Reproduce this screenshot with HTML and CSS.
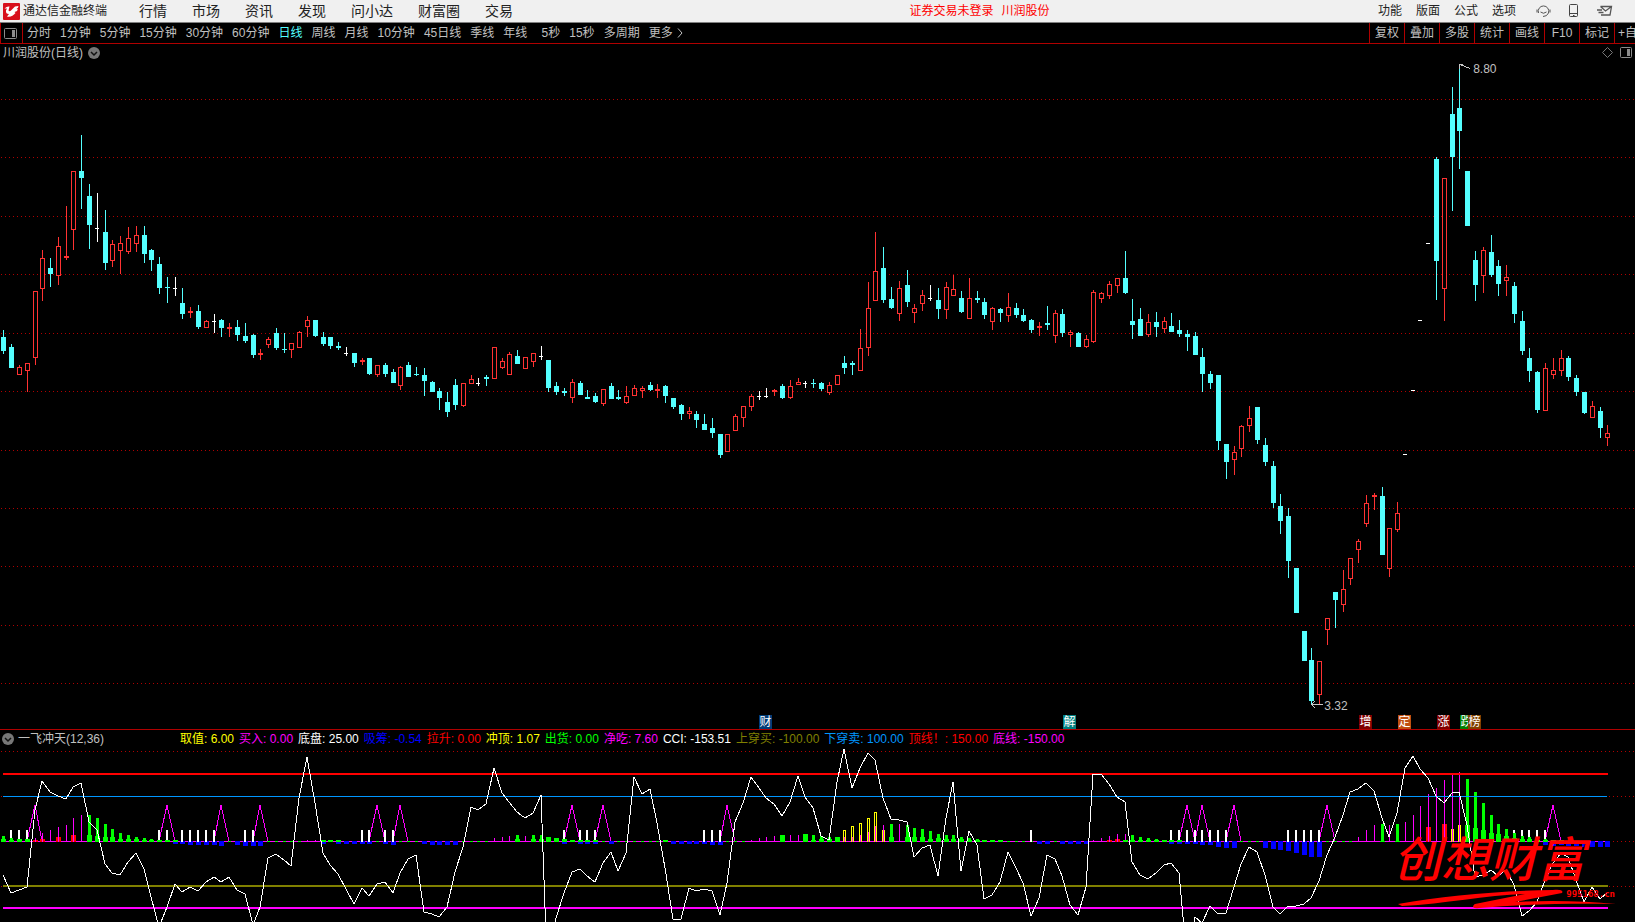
FILE: index.html
```html
<!DOCTYPE html>
<html lang="zh-CN">
<head>
    <meta charset="UTF-8">
    <meta name="viewport" content="width=device-width, initial-scale=1.0">
    <title>通达信金融终端</title>
    <link rel="stylesheet" href="styles.css">
</head>
<body>
    <header class="titlebar">
        <svg class="logo" viewBox="0 0 17 17" aria-hidden="true">
            <rect width="17" height="17" rx="1" fill="#d8101c"/>
            <path d="M1.500 5.500Q4 3 6.500 3.500L5.500 7.500Q6.500 9 8 7.500L12 3.500 15.500 3Q15.500 5 13.500 6L15 6.500Q14 8.500 11.500 9L12.500 10Q9 14.500 4 13.500L6 11Q2.500 11 3 7.500L4 5.500Z" fill="#fff"/>
        </svg>
        <span class="app-name">通达信金融终端</span>
        <nav class="main-menu">
            <a href="#">行情</a>
            <a href="#">市场</a>
            <a href="#">资讯</a>
            <a href="#">发现</a>
            <a href="#">问小达</a>
            <a href="#">财富圈</a>
            <a href="#">交易</a>
        </nav>
        <div class="login-state">
            <span>证券交易未登录</span>
            <span>川润股份</span>
        </div>
        <nav class="tool-menu">
            <a href="#">功能</a>
            <a href="#">版面</a>
            <a href="#">公式</a>
            <a href="#">选项</a>
        </nav>
        <div class="title-icons">
            <button type="button" aria-label="客服">
                <svg width="15" height="14" viewBox="0 0 15 14" fill="none" stroke="#555">
                    <path d="M2.500 9A5.300 5.300 0 1 1 12.500 9Q11 12.500 7 12.500M4.500 8Q7.500 10.500 10.500 8M1 5.500v3M14 5.500v3"/>
                </svg>
            </button>
            <button type="button" aria-label="手机">
                <svg width="10" height="14" viewBox="0 0 10 14" fill="none" stroke="#444">
                    <rect x=".5" y=".5" width="8" height="12" rx="1"/>
                    <path d="M.5 9.500h8M4 11.500h1.500"/>
                </svg>
            </button>
            <button type="button" aria-label="消息">
                <svg width="16" height="12" viewBox="0 0 16 12" fill="none" stroke="#555" stroke-width="1.300">
                    <path d="M3.500 1.500h11l-1.500 8.500h-9M3.500 1.500l5 4.500 6-4.500M0 5h5M1.500 7.500h5"/>
                </svg>
            </button>
        </div>
    </header>

    <div class="toolbar">
        <button type="button" class="side-toggle" aria-label="侧栏">
            <svg width="13" height="11" viewBox="0 0 13 11">
                <rect x=".5" y=".5" width="12" height="10" rx="1" fill="none" stroke="#8c8c8c"/>
                <rect x="8" y="2" width="3" height="7" fill="#8c8c8c"/>
            </svg>
        </button>
        <div class="periods">
            <button type="button">分时</button>
            <button type="button">1分钟</button>
            <button type="button">5分钟</button>
            <button type="button">15分钟</button>
            <button type="button">30分钟</button>
            <button type="button">60分钟</button>
            <button type="button" class="active">日线</button>
            <button type="button">周线</button>
            <button type="button">月线</button>
            <button type="button">10分钟</button>
            <button type="button">45日线</button>
            <button type="button">季线</button>
            <button type="button">年线</button>
            <button type="button">5秒</button>
            <button type="button">15秒</button>
            <button type="button">多周期</button>
            <button type="button" class="more">更多
                <svg width="6" height="10" viewBox="0 0 6 10" fill="none" stroke="#c0c0c0"><path d="M1 .5 5 5 1 9.500"/></svg>
            </button>
        </div>
        <div class="actions">
            <button type="button">复权</button>
            <button type="button">叠加</button>
            <button type="button">多股</button>
            <button type="button">统计</button>
            <button type="button">画线</button>
            <button type="button">F10</button>
            <button type="button">标记</button>
            <button type="button" class="clipped">+自</button>
        </div>
    </div>

    <section class="panel price-panel">
        <svg id="price" class="plot" viewBox="0 44 1635 685" preserveAspectRatio="none"></svg>
        <div class="panel-head">
            <h1>川润股份(日线)</h1>
            <button type="button" class="round" aria-label="展开">
                <svg width="12" height="12" viewBox="0 0 12 12"><circle cx="6" cy="6" r="6" fill="#777"/><path d="M3 5 6 8 9 5" fill="none" stroke="#111" stroke-width="1.500"/></svg>
            </button>
            <div class="corner">
                <svg width="11" height="11" viewBox="0 0 11 11"><path d="M5.500.5 10.500 5.500 5.500 10.500.5 5.500Z" fill="none" stroke="#777"/></svg>
                <svg width="12" height="11" viewBox="0 0 12 11"><rect x=".5" y=".5" width="11" height="10" rx="1" fill="none" stroke="#8c8c8c"/><rect x="7" y="2" width="3" height="7" fill="#8c8c8c"/></svg>
            </div>
        </div>
        <span class="mark high">8.80</span>
        <span class="mark low">3.32</span>
        <div id="events"></div>
    </section>

    <section class="panel indicator-panel">
        <svg id="indicator" class="plot" viewBox="0 730 1635 192" preserveAspectRatio="none"></svg>
        <div class="panel-head">
            <button type="button" class="round" aria-label="展开">
                <svg width="12" height="12" viewBox="0 0 12 12"><circle cx="6" cy="6" r="6" fill="#777"/><path d="M3 5 6 8 9 5" fill="none" stroke="#111" stroke-width="1.500"/></svg>
            </button>
            <h2>一飞冲天(12,36)</h2>
            <div class="values">
                <span class="yellow">取值: 6.00</span>
                <span class="magenta">买入: 0.00</span>
                <span class="white">底盘: 25.00</span>
                <span class="blue">吸筹: -0.54</span>
                <span class="red">拉升: 0.00</span>
                <span class="yellow">冲顶: 1.07</span>
                <span class="green">出货: 0.00</span>
                <span class="magenta">净吃: 7.60</span>
                <span class="white">CCI: -153.51</span>
                <span class="olive">上穿买: -100.00</span>
                <span class="sky">下穿卖: 100.00</span>
                <span class="red">顶线！: 150.00</span>
                <span class="magenta">底线: -150.00</span>
            </div>
        </div>
        <div class="watermark">
            <svg viewBox="0 0 250 102" aria-hidden="true">
                <path d="M13 84C60 76 110 71 168 70 174 69 179 70 177 73L130 82C165 80 200 81 231 84 190 83 140 84 94 88 87 89 87 86 90 84L140 74C100 75 60 84 17 86Z" fill="#f00"/>
            </svg>
            <strong>创想财富</strong>
            <em>995168.cn</em>
        </div>
    </section>

    <script src="chart.js"></script>
</body>
</html>
```
FILE: styles.css
```css
* {
    box-sizing: border-box;
}
body {
    margin: 0;
    min-height: 100vh;
    display: grid;
    grid-template-rows: 23px 21px 1fr 192px;
    background-color: #000;
    color: #c0c0c0;
    font-family: "Liberation Sans", "Noto Sans CJK SC", sans-serif;
    font-size: 12px;
    overflow: hidden;
}
button {
    background: none;
    border: none;
    padding: 0;
    color: inherit;
    font: inherit;
    cursor: pointer;
    white-space: nowrap;
}
button svg {
    display: block;
}
a {
    color: inherit;
    text-decoration: none;
}

/* title bar */
.titlebar {
    display: flex;
    align-items: center;
    background-color: #f0f0f0;
    border-bottom: 1px solid #808080;
    color: #222;
    padding: 0 22px 0 3px;
    white-space: nowrap;
    line-height: 20px;
}
.logo {
    width: 17px;
    height: 17px;
    margin-right: 3px;
}
.main-menu {
    display: flex;
    gap: 25px;
    margin-left: 32px;
    font-size: 14px;
}
.login-state {
    flex: 1;
    display: flex;
    justify-content: center;
    gap: 8px;
    padding-left: 68px;
    color: #f00;
}
.tool-menu {
    display: flex;
    gap: 14px;
}
.title-icons {
    display: flex;
    align-items: center;
    gap: 18px;
    margin-left: 20px;
}

/* period toolbar */
.toolbar {
    display: flex;
    border-bottom: 1px solid #b00000;
    border-left: 1px solid #b00000;
    overflow: hidden;
    line-height: 20px;
}
.side-toggle {
    width: 22px;
    padding-left: 3px;
    border-right: 1px solid #b00000;
}
.periods {
    display: flex;
    gap: 9px;
    padding-left: 4px;
}
.periods button {
    min-width: 24px;
    text-align: right;
}
.periods .active {
    color: #54ffff;
}
.periods .more {
    display: flex;
    align-items: center;
    gap: 4px;
}
.actions {
    display: flex;
    margin-left: auto;
}
.actions button {
    width: 35px;
    border-left: 1px solid #b00000;
}
.actions .clipped {
    width: 21px;
    padding-left: 3px;
    text-align: left;
    overflow: hidden;
}

/* charts */
.panel {
    position: relative;
    overflow: hidden;
}
.price-panel {
    border-bottom: 1px solid #b00000;
}
.plot {
    position: absolute;
    width: 100%;
    height: 100%;
    shape-rendering: crispEdges;
}
.panel-head {
    position: relative;
    display: flex;
    align-items: center;
    height: 17px;
    padding: 0 3px 0 2px;
    line-height: 16px;
    white-space: nowrap;
}
.panel-head h1,
.panel-head h2 {
    margin: 0;
    font-size: 12px;
    font-weight: normal;
}
.panel-head h1 {
    padding: 0 5px 0 1px;
}
.panel-head h2 {
    width: 166px;
    padding-left: 4px;
}
.corner {
    display: flex;
    gap: 7px;
    margin-left: auto;
}
.values {
    display: flex;
    align-items: baseline;
    gap: 5px;
}
.yellow { color: #ff0; }
.magenta { color: #f0f; }
.white { color: #fff; }
.blue { color: #00f; }
.red { color: #f00; }
.green { color: #0f0; }
.olive { color: #808000; }
.sky { color: #0096ff; }

.mark {
    position: absolute;
    line-height: 14px;
}
.high {
    left: 90.100%;
    top: 2.700%;
}
.low {
    left: 81%;
    top: 95.600%;
}
.event {
    position: absolute;
    bottom: 0;
    width: 13px;
    height: 14px;
    margin-left: -7px;
    color: #fff;
    line-height: 14px;
    text-align: center;
}
.event.navy { background-color: #003c78; }
.event.teal { background-color: #008080; }
.event.maroon { background-color: #800000; }
.event.orange { background-color: #c05010; }
.event.forest { background-color: #008000; }
.event.brown { background-color: #804000; }

.watermark {
    position: absolute;
    right: 0;
    bottom: 0;
    width: 250px;
    height: 102px;
    padding: 8px 20px 0 8px;
    color: #f00;
}
.watermark svg {
    position: absolute;
    inset: 0;
}
.watermark strong {
    display: block;
    font-family: "Noto Sans CJK SC", sans-serif;
    font-size: 48px;
    font-style: italic;
    font-weight: 500;
    line-height: 56px;
}
.watermark em {
    position: relative;
    display: block;
    font: bold 9px "DejaVu Sans Mono", monospace;
    line-height: 20px;
    text-align: right;
}
```
FILE: chart.js
```js
const FIRST = 3.9;
const STEP = 7.786;
const xAt = i => Math.floor(FIRST + i * STEP);

// type (r = up, c = down, w = flat), high, body top, body bottom, low
const candles = `
c 330 337 351 354|c 344 347 368 368|r 365 367 375 375|r 363 363 371 392|r 291 291 358 365|r 250 258 289 301
c 258 268 274 287|r 237 246 276 285|r 206 256 258 260|r 171 171 230 250|c 135 171 178 209|c 184 196 225 249
w 193 228 229 242|c 210 232 263 270|r 240 244 261 267|r 236 243 251 274|r 227 238 252 254|r 226 235 244 252
c 226 235 254 263|c 249 250 260 271|c 257 264 288 294|c 277 287 288 303|w 277 288 289 296|c 288 303 314 319
r 307 311 313 318|c 305 311 327 329|r 320 321 328 328|w 314 321 322 333|c 319 320 328 337|r 323 327 329 337
c 320 327 335 341|c 323 336 341 343|c 334 335 355 358|r 349 353 355 360|r 337 339 345 348|c 328 333 348 350
c 333 349 350 353|r 343 343 350 358|r 331 332 348 348|r 316 320 327 337|c 320 320 336 337|c 332 337 344 346
c 337 337 346 349|c 342 346 348 350|w 347 353 354 356|c 353 353 363 367|r 358 360 362 365|c 358 358 374 375
r 365 365 375 377|c 363 365 374 377|c 369 372 383 383|r 366 367 386 390|c 362 365 377 377|c 367 374 375 376
c 368 375 381 396|c 381 382 392 392|c 388 391 398 410|c 392 402 412 417|c 379 385 405 410|r 383 383 406 407
r 375 379 384 384|w 378 383 384 386|c 375 377 379 386|r 347 347 379 379|r 358 361 368 369|r 352 354 375 375
c 350 356 364 364|r 357 357 369 369|r 353 353 362 367|w 346 356 357 360|c 360 360 388 392|c 382 386 392 395
c 388 391 393 396|r 379 382 398 403|c 381 383 395 395|c 390 397 399 399|c 393 396 402 403|r 389 389 404 406
c 383 386 399 399|c 390 397 399 400|r 386 396 403 404|r 385 388 396 396|r 386 388 391 398|c 382 385 390 391
r 384 389 391 398|c 385 386 396 403|c 398 398 407 409|c 404 405 414 420|r 407 411 414 419|c 411 414 420 428
c 414 424 430 430|c 418 428 433 438|c 434 434 455 458|r 434 434 452 452|r 414 416 431 431|r 406 406 418 427
r 394 396 407 411|w 391 396 397 400|w 388 396 397 398|r 389 390 392 396|c 384 386 398 399|r 380 386 398 399
r 378 382 385 385|w 381 383 384 388|c 379 383 384 388|c 382 383 389 391|r 382 385 393 395|r 375 375 385 385
c 356 363 368 374|c 361 363 365 375|r 329 348 371 371|r 282 308 348 356|r 232 271 301 301|c 247 268 300 303
c 287 299 308 309|r 281 288 314 321|c 270 285 302 307|r 304 308 313 323|r 290 295 304 311|w 285 298 299 301
c 288 300 309 319|r 282 287 310 319|r 275 289 296 296|c 291 298 312 313|r 278 298 319 319|c 291 298 300 303
c 298 302 315 319|r 307 308 322 330|c 308 309 313 322|r 293 307 316 322|c 303 308 315 318|c 309 315 321 322
c 319 320 330 333|r 322 326 328 336|c 306 323 325 330|r 310 313 336 343|c 309 314 333 337|r 330 332 335 347
c 332 333 347 347|r 335 339 347 348|r 290 292 342 343|r 292 293 299 303|r 281 284 296 299|r 278 278 286 293
c 251 278 293 294|c 299 321 325 339|c 308 319 336 336|r 314 322 335 337|c 312 322 327 337|r 317 321 329 333
c 313 326 332 332|c 320 330 334 337|c 330 334 337 351|c 332 336 355 355|c 348 357 374 392|c 371 374 383 389
c 375 375 441 450|c 444 444 462 479|r 446 452 460 475|r 425 426 449 457|r 406 418 426 432|c 407 407 440 444
c 438 445 462 466|c 461 466 503 508|c 494 506 521 534|c 508 516 561 578|c 568 568 613 613|c 631 631 661 661
c 648 660 701 705|r 661 661 695 704|r 618 618 630 645|c 592 592 600 628|r 570 589 605 612|r 558 558 579 585
r 539 541 550 563|r 495 503 524 527|r 493 495 497 510|c 487 496 555 555|r 528 528 569 577|r 502 513 530 532
w 454 454 455 455|w 390 390 391 391|w 320 320 321 321|w 243 243 244 244|c 157 159 261 300|r 178 178 289 321
c 87 114 157 211|c 64 108 131 169|c 171 171 226 226|c 251 260 285 301|r 247 250 276 293|c 235 252 275 277
c 260 266 284 296|r 265 277 281 296|c 282 286 314 323|c 311 321 351 355|c 348 358 371 382|c 371 372 410 413
r 363 368 411 411|r 358 370 375 379|r 350 358 371 376|c 356 358 377 381|c 375 378 392 396|c 392 392 413 414
r 401 406 418 418|c 407 411 428 438|r 425 433 438 446`
    .trim().split(/[|\n]/).map(row => {
        const [type, ...v] = row.split(' ');
        return [type, ...v.map(Number)];
    });

const colors = { r: '#ff3232', c: '#54ffff', w: '#ffffff' };
const rect = (x, y, w, h, fill) => `<rect x="${x}" y="${y}" width="${w}" height="${h}" fill="${fill}"/>`;
const dotted = (y, from) => `<path d="M${from} ${y + 0.5}H1635" stroke="#b00000" stroke-dasharray="1 3"/>`;

// price chart
let out = [99, 157, 216, 274, 333, 391, 450, 508, 566, 625, 683].map(y => dotted(y, 1)).join('');

candles.forEach(([type, high, top, bottom, low], i) => {
    const x = xAt(i);
    const color = colors[type];
    if (type === 'r' && bottom - top > 2) {
        out += rect(x, high, 1, top - high, color) + rect(x, bottom, 1, low - bottom, color);
        out += `<rect x="${x - 1.5}" y="${top + 0.5}" width="4" height="${bottom - top - 1}" fill="#000" stroke="${color}"/>`;
    } else {
        out += rect(x, high, 1, low - high, color);
        out += rect(x - 2, top, type === 'w' ? 4 : 5, bottom - top, color);
    }
});
out += '<path d="M1459.500 69V64.500H1463M1460 64.500 1470 68.500M1312 704.500H1323M1315 701 1312 704.500 1315 708" fill="none" stroke="#c8c8c8"/>';
document.getElementById('price').innerHTML = out;

// event tags under the candles
const events = [
    [98, '财', 'navy'], [137, '解', 'teal'], [175, '增', 'maroon'], [180, '定', 'orange'],
    [185, '涨', 'maroon'], [188, '跌', 'forest'], [189, '榜', 'brown']
];
document.getElementById('events').innerHTML = events.map(([i, text, color]) =>
    `<span class="event ${color}" style="left:${xAt(i) / 16.35}%">${text}</span>`).join('');

// indicator: readings are on a scale of 3 per pixel, zero level at 394
const yAt = v => Math.round(710 + v / 3);
const ZERO = 841;

const cci = [
    496, 550, 541, 532, 300, 214, 245, 257, 267, 232, 220, 335, 360, 461, 490, 496, 455, 430, 478, 560,
    650, 590, 521, 547, 532, 543, 517, 502, 517, 502, 539, 553, 645, 590, 443, 433, 450, 467, 265, 140,
    280, 428, 466, 492, 538, 583, 535, 559, 523, 517, 550, 488, 446, 436, 606, 612, 622, 590, 485, 410,
    290, 300, 281, 175, 250, 275, 305, 325, 310, 256, 850, 625, 550, 485, 478, 498, 517, 458, 425, 482,
    428, 202, 253, 238, 340, 475, 628, 628, 535, 544, 538, 544, 615, 520, 335, 280, 202, 235, 265, 283,
    317, 275, 199, 262, 295, 378, 390, 215, 118, 233, 175, 129, 150, 265, 327, 331, 337, 442, 415, 406,
    499, 325, 217, 482, 364, 405, 566, 556, 515, 427, 475, 520, 618, 565, 436, 446, 497, 585, 615, 530,
    193, 193, 222, 260, 276, 455, 495, 506, 488, 464, 460, 490, 750, 622, 640, 587, 612, 609, 530, 463,
    411, 425, 495, 592, 612, 587, 587, 583, 563, 512, 435, 380, 315, 245, 238, 220, 244, 325, 380, 310,
    175, 139, 177, 203, 258, 280, 250, 247, 345, 500, 495, 481, 497, 480, 525, 619, 602, 575, 510, 460,
    428, 440, 510, 577, 530, 568, 548
];
const pulses = [4, 21, 28, 33, 48, 51, 73, 77, 93, 152, 154, 158, 170, 199];
const base = [
    1, 2, 3, 20, 21, 23, 24, 25, 26, 27, 31, 32, 46, 47, 49, 50, 72, 74, 75, 76, 90, 91, 92, 132,
    150, 151, 152, 153, 154, 155, 156, 157, 165, 166, 167, 168, 169, 194, 195, 196, 197, 198
];
// candle index: [reading, reading of the wide foot]
const green = {
    0: [378, 388], 1: [383, 389], 2: [387, 387], 3: [387, 387], 11: [315, 374], 12: [324, 378], 13: [342, 381],
    14: [357, 381], 15: [369, 387], 16: [375, 387], 17: [381, 387], 18: [384, 389], 19: [387, 389], 20: [389, 389],
    21: [390, 390], 22: [390, 390], 41: [390, 390], 42: [390, 390], 43: [390, 390], 66: [375, 388],
    68: [375, 388], 69: [375, 388], 70: [381, 381], 71: [384, 384], 72: [387, 387], 73: [390, 390], 74: [390, 390],
    75: [390, 390], 76: [390, 390], 85: [390, 390], 100: [375, 375], 103: [372, 372], 104: [375, 390],
    105: [378, 388], 106: [380, 388], 107: [381, 381], 114: [342, 381], 116: [345, 380], 117: [354, 381],
    118: [357, 381], 119: [363, 387], 120: [372, 385], 121: [375, 387], 122: [375, 387], 123: [381, 388],
    124: [384, 390], 125: [387, 390], 126: [390, 390], 127: [390, 390], 128: [390, 390], 144: [390, 390],
    145: [375, 390], 146: [381, 390], 147: [384, 390], 148: [387, 390], 149: [390, 390], 150: [390, 390],
    151: [390, 390], 177: [342, 394], 179: [342, 394], 188: [207, 345], 189: [246, 354], 190: [279, 360],
    191: [315, 369], 192: [342, 372], 193: [357, 378], 194: [369, 385], 195: [378, 388], 196: [381, 388],
    197: [384, 390], 198: [387, 390], 199: [390, 390], 200: [390, 390]
};
const blue = {
    22: 399, 23: 399, 24: 401, 25: 401, 26: 401, 27: 401, 28: 404, 30: 401, 31: 404, 32: 404, 33: 404,
    41: 399, 43: 398, 44: 398, 45: 398, 46: 399, 47: 398, 49: 398, 50: 401, 54: 399, 55: 401, 56: 401,
    57: 401, 58: 401, 72: 398, 74: 398, 75: 398, 76: 398, 78: 398, 86: 398, 87: 398, 88: 398, 89: 398,
    90: 398, 91: 401, 92: 401, 133: 398, 134: 398, 136: 398, 137: 398, 138: 398, 139: 398, 150: 398,
    151: 399, 152: 399, 153: 399, 154: 401, 155: 401, 156: 407, 157: 411, 158: 411, 162: 411, 163: 414,
    164: 417, 165: 420, 166: 426, 167: 432, 168: 437, 169: 437, 198: 401, 199: 404, 200: 401, 201: 404,
    202: 404, 203: 407, 204: 407, 205: 407, 206: 407
};
const rising = {
    4: 384, 5: 370, 6: 360, 7: 351, 8: 345, 9: 324, 10: 315, 11: 330, 39: 390, 40: 390, 63: 384, 64: 381,
    65: 378, 67: 378, 96: 390, 97: 384, 98: 381, 99: 378, 101: 375, 102: 375, 108: 381, 109: 381, 110: 375,
    111: 366, 112: 348, 113: 345, 115: 342, 140: 390, 141: 384, 142: 378, 143: 372, 144: 372, 174: 381,
    175: 360, 176: 345, 178: 345, 180: 336, 181: 315, 182: 288, 183: 252, 184: 234, 185: 210, 186: 192, 187: 186
};
const red = { 4: 390, 5: 387, 7: 381, 9: 375, 142: 390, 143: 387, 183: 351, 185: 342 };
const yellow = { 108: 360, 109: 348, 110: 339, 111: 324, 112: 306, 113: 360, 186: 357, 187: 345 };

const bar = (i, v, w, color) => {
    const y = yAt(v);
    const x = xAt(Number(i)) - Math.floor(w / 2);
    return y < ZERO ? rect(x, y, w, ZERO + 1 - y, color) : rect(x, ZERO, w, y - ZERO + 1, color);
};
const each = (data, draw) => Object.entries(data).map(([i, v]) => draw(i, v)).join('');

out = [751, 796, ZERO, 886].map(y => dotted(y, 1)).join('');
out += rect(3, ZERO, 1605, 1, '#f0f');
candles.forEach((c, i) => {
    if (!rising[i]) out += rect(xAt(i) - 1, ZERO, 3, 1, '#0f0');
});
out += pulses.map(i =>
    `<path d="M${xAt(i - 1)} ${ZERO}L${xAt(i)} 805 ${xAt(i + 1)} ${ZERO}" fill="none" stroke="#f0f"/>`).join('');
out += each(red, (i, v) => bar(i, v, 5, '#f00'));
out += each(yellow, (i, v) =>
    `<rect x="${xAt(Number(i)) - 0.5}" y="${yAt(v) + 0.5}" width="2" height="${ZERO - yAt(v)}" fill="none" stroke="#ff0"/>`);
out += each(rising, (i, v) => bar(i, v, 1, '#f0f'));
out += each(blue, (i, v) => bar(i, v, 5, '#00f'));
out += base.map(i => bar(i, 360, 2, '#fff')).join('');
out += each(green, (i, v) => bar(i, v[0], 3, '#0f0') + bar(i, v[1], 5, '#0f0'));
out += rect(3, 773, 1605, 2, '#f00');
out += rect(3, 796, 1604, 1, '#0096ff');
out += rect(3, 885, 1605, 2, '#808000');
out += rect(3, 907, 1605, 2, '#f0f');
out += `<polyline points="${cci.map((v, i) => xAt(i) + ',' + yAt(v)).join(' ')}" fill="none" stroke="#fff"/>`;
document.getElementById('indicator').innerHTML = out;
```
